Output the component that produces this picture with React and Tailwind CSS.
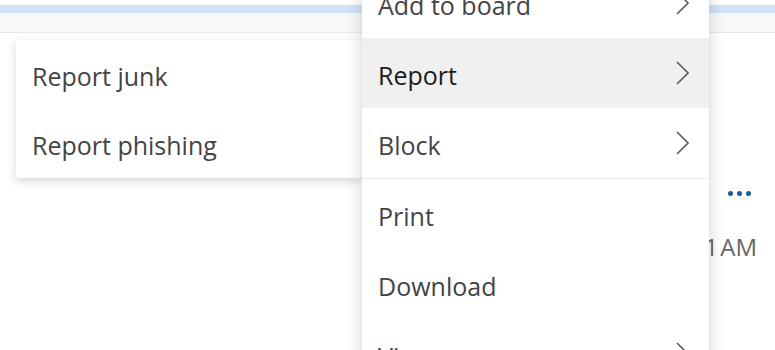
const font = { fontFamily: '"Open Sans", "Noto Sans", sans-serif' };

function Chevron() {
  return (
    <svg width="14" height="24" viewBox="0 0 14 24" className="text-[#5c5c5c]">
      <path d="M2 1 L13 12 L2 23" fill="none" stroke="currentColor" strokeWidth="1.6" />
    </svg>
  );
}

function MenuRow({ label, sub, active, dark }) {
  return (
    <div
      className={`flex h-[70px] items-center justify-between pl-4 pr-[20px] ${
        active ? "bg-[#eff0ef]" : "bg-white"
      }`}
    >
      <span className={`pt-[5px] text-[25px] ${dark ? "text-[#1b1b1b]" : "text-[#444]"}`}>{label}</span>
      {sub && <Chevron />}
    </div>
  );
}

export default function App() {
  return (
    <div className="relative h-[350px] w-[775px] overflow-hidden bg-white" style={font}>
      {/* header strips behind the menus */}
      <div className="h-[5px] bg-white" />
      <div className="h-[8px] bg-[#d2e3f8]" />
      <div className="h-[20px] border-b border-[#e8e8e8] bg-[#f8f8f8]" />

      {/* message row peeking out on the right */}
      <div className="absolute right-[24px] top-[191px] flex gap-[4px]">
        <span className="h-[5px] w-[5px] rounded-full bg-[#1e5a9e]" />
        <span className="h-[5px] w-[5px] rounded-full bg-[#1e5a9e]" />
        <span className="h-[5px] w-[5px] rounded-full bg-[#1e5a9e]" />
      </div>
      <div className="absolute right-[18px] top-[229px] flex gap-[2px] text-[24px] text-[#666]">
        <span>11:41</span>
        <span>AM</span>
      </div>

      {/* submenu */}
      <div className="absolute left-[16px] top-[40px] z-10 w-[346px] rounded-[3px] bg-white shadow-[0_3px_10px_rgba(0,0,0,0.16)]">
        <div className="flex h-[69px] items-center pl-4">
          <span className="pt-[5px] text-[25px] text-[#444]">Report junk</span>
        </div>
        <div className="flex h-[69px] items-center pl-4">
          <span className="pt-[5px] text-[25px] text-[#444]">Report phishing</span>
        </div>
      </div>

      {/* main context menu */}
      <div className="absolute left-[362px] top-[-32px] z-20 w-[347px] bg-white shadow-[0_4px_16px_rgba(0,0,0,0.18)]">
        <MenuRow label="Add to board" sub />
        <MenuRow label="Report" sub active dark />
        <MenuRow label="Block" sub />
        <div className="h-px bg-[#ebebeb]" />
        <MenuRow label="Print" />
        <MenuRow label="Download" />
        <MenuRow label="View" sub />
      </div>
    </div>
  );
}
